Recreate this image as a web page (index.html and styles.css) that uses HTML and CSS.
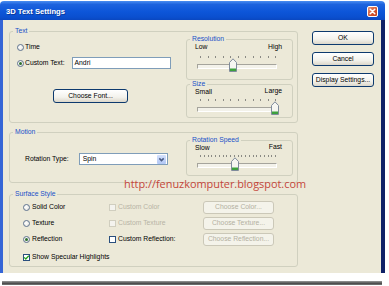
FILE: index.html
```html
<!DOCTYPE html>
<html lang="en">
<head>
<meta charset="utf-8">
<title>3D Text Settings</title>
<link rel="stylesheet" href="styles.css">
</head>
<body>
<div class="window">
  <div class="titlebar">
    <span class="title">3D Text Settings</span>
    <span class="close"><svg viewBox="0 0 11 11" width="11" height="11"><path d="M3.2 3.2 L7.8 7.8 M7.8 3.2 L3.2 7.8" stroke="#fff" stroke-width="1.5" stroke-linecap="round"/></svg></span>
  </div>
  <div class="client">
    <div class="main">
      <fieldset class="group">
        <legend>Text</legend>
        <div class="text-body">
          <div class="text-left">
            <div class="opt time-row"><span class="radio"></span>Time</div>
            <div class="opt custom-row"><span class="radio on"></span>Custom Text:<span class="input">Andri</span></div>
            <span class="btn font-btn">Choose Font...</span>
          </div>
          <div class="slider-col">
            <fieldset class="sgroup res">
              <legend>Resolution</legend>
              <div class="scale"><span>Low</span><span>High</span></div>
              <div class="ticks"><i></i><i></i><i></i><i></i><i></i><i></i><i></i><i></i><i></i><i></i><i></i></div>
              <div class="track"><span class="thumb" style="left:45%"><svg viewBox="0 0 8 14" width="8" height="14"><path d="M0.5 4.5 L4 0.8 L7.5 4.5 V13.5 H0.5 Z" fill="#f6f6f1" stroke="#7f8b9b"/><rect x="1" y="10.5" width="6" height="2.5" fill="#3da13d"/></svg></span></div>
            </fieldset>
            <fieldset class="sgroup size">
              <legend>Size</legend>
              <div class="scale"><span>Small</span><span class="hi">Large</span></div>
              <div class="ticks"><i></i><i></i><i></i><i></i><i></i><i></i><i></i><i></i><i></i><i></i><i></i></div>
              <div class="track"><span class="thumb" style="left:97%"><svg viewBox="0 0 8 14" width="8" height="14"><path d="M0.5 4.5 L4 0.8 L7.5 4.5 V13.5 H0.5 Z" fill="#f6f6f1" stroke="#7f8b9b"/><rect x="1" y="10.5" width="6" height="2.5" fill="#3da13d"/></svg></span></div>
            </fieldset>
          </div>
        </div>
      </fieldset>

      <fieldset class="group motion">
        <legend>Motion</legend>
        <div class="motion-body">
          <div class="motion-left">
            <div class="opt type-row">Rotation Type:<span class="select"><span class="val">Spin</span><span class="arrow"><svg viewBox="0 0 9 9" width="9" height="9"><path d="M2.3 3.4 L4.5 5.6 L6.7 3.4" fill="none" stroke="#4a5d86" stroke-width="1.5"/></svg></span></span></div>
          </div>
          <div class="slider-col">
            <fieldset class="sgroup speed">
              <legend>Rotation Speed</legend>
              <div class="scale"><span>Slow</span><span class="hi">Fast</span></div>
              <div class="ticks"><i></i><i></i><i></i><i></i><i></i><i></i><i></i><i></i><i></i><i></i><i></i><i></i><i></i><i></i><i></i><i></i><i></i><i></i><i></i><i></i><i></i></div>
              <div class="track"><span class="thumb" style="left:48%"><svg viewBox="0 0 8 14" width="8" height="14"><path d="M0.5 4.5 L4 0.8 L7.5 4.5 V13.5 H0.5 Z" fill="#f6f6f1" stroke="#7f8b9b"/><rect x="1" y="10.5" width="6" height="2.5" fill="#3da13d"/></svg></span></div>
            </fieldset>
          </div>
        </div>
      </fieldset>

      <fieldset class="group surface">
        <legend>Surface Style</legend>
        <div class="surface-body">
          <div class="opt"><span class="radio"></span>Solid Color</div>
          <div class="opt dim"><span class="check off"></span>Custom Color</div>
          <div class="opt"><span class="btn dis">Choose Color...</span></div>

          <div class="opt"><span class="radio"></span>Texture</div>
          <div class="opt dim"><span class="check off"></span>Custom Texture</div>
          <div class="opt"><span class="btn dis">Choose Texture...</span></div>

          <div class="opt"><span class="radio on"></span>Reflection</div>
          <div class="opt"><span class="check"></span>Custom Reflection:</div>
          <div class="opt"><span class="btn dis">Choose Reflection...</span></div>

          <div class="opt spec"><span class="check"><svg viewBox="0 0 7 7" width="7" height="7"><path d="M1.2 3.4 L2.8 5 L5.8 1.8" fill="none" stroke="#21a121" stroke-width="1.3"/></svg></span>Show Specular Highlights</div>
        </div>
      </fieldset>
    </div>

    <div class="side">
      <span class="btn">OK</span>
      <span class="btn">Cancel</span>
      <span class="btn">Display Settings...</span>
    </div>
  </div>
  <div class="watermark">http://fenuzkomputer.blogspot.com</div>
</div>
<div class="shadow"></div>
</body>
</html>
```

FILE: styles.css
```css
* { box-sizing: border-box; }
html, body { margin: 0; padding: 0; background: #fff; }
body {
  width: 389px;
  height: 286px;
  overflow: hidden;
  font-family: "Liberation Sans", Arial, sans-serif;
  font-size: 6.8px;
  line-height: 8px;
  color: #000;
}
.window {
  position: relative;
  width: 385px;
  margin-top: 1px;
}
.titlebar {
  height: 19px;
  display: flex;
  align-items: center;
  justify-content: space-between;
  padding: 2px 7px 0 6px;
  border-radius: 4px 4px 0 0;
  background: linear-gradient(#4a8df0 0, #1d63de 18%, #0d56d9 55%, #0a4fcf 85%, #0a47c0 100%);
}
.title {
  color: #fff;
  font-weight: bold;
  font-size: 7.6px;
  text-shadow: 1px 1px 0 #0b3a9e;
}
.close {
  width: 11px;
  height: 11px;
  display: flex;
  border: 1px solid #fff;
  border-radius: 2px;
  background: linear-gradient(135deg, #e9987c, #d5552f 55%, #c2401d);
}
.close svg { display: block; margin: -1px; }
.client {
  height: 253px;
  background: #ece9d8;
  border-left: 3px solid #3565d6;
  border-right: 4px solid #0e2167;
  padding: 7px 0 6px 6px;
  display: grid;
  grid-template-columns: 289px 62px;
  column-gap: 14px;
  align-items: start;
}
.main { display: flex; flex-direction: column; }

fieldset { margin: 0; padding: 0; min-width: 0; }
fieldset > legend {
  margin-left: 3px;
  padding: 0 2px;
  color: #2050c8;
  line-height: 8px;
  font-size: 6.8px;
}
.group { border: 1px solid #d0d0bf; border-radius: 3px; }
.motion { margin-top: 5px; }
.surface { margin-top: 7px; }

.text-body, .motion-body {
  display: grid;
  grid-template-columns: 1fr 107px;
  padding: 0 4px 4px 0;
}
.motion-body { padding-bottom: 6px; }

.text-left {
  display: flex;
  flex-direction: column;
  align-items: flex-start;
  padding-left: 7px;
}
.opt { display: flex; align-items: center; white-space: nowrap; }
.time-row { margin-top: 6px; height: 12px; }
.custom-row { margin-top: 4px; height: 12px; }
.font-btn { margin-top: 20px; margin-left: 36px; width: 75px; height: 13px; }

.radio {
  width: 7px;
  height: 7px;
  border-radius: 50%;
  border: 1px solid #5f7390;
  background: radial-gradient(circle at 40% 40%, #fff, #e2e1da);
  margin-right: 1px;
  display: flex;
  align-items: center;
  justify-content: center;
  flex: none;
}
.radio.on::after {
  content: "";
  width: 3px;
  height: 3px;
  border-radius: 50%;
  background: #2f6f2f;
}
.surface .radio { margin-right: 2px; }

.check {
  width: 7px;
  height: 7px;
  border: 1px solid #2a4f7e;
  background: #fff;
  margin-right: 2px;
  flex: none;
  display: flex;
}
.check svg { display: block; margin: -1px; }
.check.off { border-color: #d0cebf; background: #f4f3ee; }
.dim { color: #b7b4a5; }

.input {
  margin-left: 7px;
  width: 99px;
  height: 12px;
  border: 1px solid #7f9db9;
  background: #fff;
  padding-left: 2px;
  display: flex;
  align-items: center;
}

.btn {
  display: flex;
  align-items: center;
  justify-content: center;
  height: 14px;
  border: 1px solid #0d3a6e;
  border-radius: 3px;
  background: linear-gradient(#ffffff, #f3f2ec 60%, #dcd7ca);
  white-space: nowrap;
}
.btn.dis {
  width: 71px;
  height: 13px;
  border-color: #cbc8b8;
  color: #b3b0a1;
  background: #f4f3ea;
}

.slider-col { display: flex; flex-direction: column; }
.sgroup { border: 1px solid #d0d0bf; border-radius: 3px; }
.scale {
  display: flex;
  justify-content: space-between;
  padding: 0 10px 0 8px;
  height: 8px;
}
.scale .hi { position: relative; top: -1px; }
.ticks {
  display: flex;
  justify-content: space-between;
  margin: 3px 16px 0 13px;
  height: 2px;
}
.res .ticks { margin-top: 5px; }
.ticks i { width: 1px; height: 2px; background: #8a8a84; }
.track {
  position: relative;
  height: 14px;
  margin: 0 15px 0 10px;
}
.track::before {
  content: "";
  position: absolute;
  left: 0;
  right: 0;
  top: 6px;
  height: 3px;
  border: 1px solid;
  border-color: #a5a49c #fff #fff #a5a49c;
  background: #f3f2ea;
}
.thumb {
  position: absolute;
  top: 0;
  width: 8px;
  height: 14px;
  transform: translateX(-50%);
}
.thumb svg { display: block; }
.res { padding-bottom: 7px; }
.size { padding-bottom: 2px; }
.speed { padding-bottom: 4px; }

.motion-left { padding-left: 15px; }
.type-row { margin-top: 17px; height: 12px; }
.select {
  margin-left: 10px;
  width: 89px;
  height: 12px;
  border: 1px solid #7f9db9;
  background: #fff;
  display: flex;
  align-items: center;
  justify-content: space-between;
  padding: 0 1px 0 3px;
}
.arrow {
  width: 9px;
  height: 9px;
  border-radius: 1px;
  background: linear-gradient(#d4e1fc, #b2c7f5);
  display: flex;
}

.surface-body {
  display: grid;
  grid-template-columns: 86px 94px 71px;
  grid-template-rows: 16px 16px 16px 16px;
  padding: 1px 0 3px 13px;
}
.spec {
  grid-column: 1 / 4;
  margin-top: 4px;
  height: 12px;
}

.side {
  display: flex;
  flex-direction: column;
  gap: 7px;
  margin-top: 4px;
}

.watermark {
  position: absolute;
  left: 124px;
  top: 176px;
  font-family: "Open Sans", "Liberation Sans", sans-serif;
  font-size: 10.9px;
  line-height: 14px;
  color: #c4463a;
}

.shadow {
  margin: 8px 0 0 2px;
  width: 380px;
  height: 4px;
  background: linear-gradient(#9a9a9a, #4a4a4a 60%, #7a7a7a);
}
```
